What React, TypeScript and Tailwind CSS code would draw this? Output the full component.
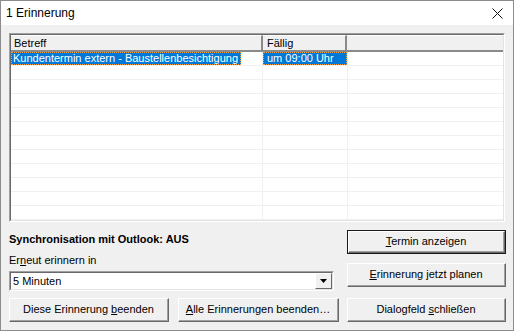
import React from "react";

const font = { fontFamily: '"Liberation Sans", Arial, sans-serif' };

function Btn({ children, w, primary }: { children: React.ReactNode; w: string; primary?: boolean }) {
  return (
    <div className={`${w} h-[24px] ${primary ? "border border-[#1a1a1a]" : ""}`}>
      <div className="h-full border-t border-l border-t-white border-l-white border-b border-r border-b-[#696969] border-r-[#696969]">
        <div className="h-full flex items-center justify-center bg-[#f0f0f0] border-b border-r border-b-[#a0a0a0] border-r-[#a0a0a0] text-[11px] text-black whitespace-nowrap">
          {children}
        </div>
      </div>
    </div>
  );
}

export default function App() {
  const rows = Array.from({ length: 12 });
  return (
    <div className="w-[514px] h-[331px] bg-[#f0f0f0] border border-[#8c8c8c] flex flex-col overflow-hidden" style={font}>
      {/* title bar */}
      <div className="h-[24px] bg-white flex items-center justify-between pl-[5px] pr-[10px] shrink-0">
        <span className="text-[12px] text-black">1 Erinnerung</span>
        <svg width="11" height="11" viewBox="0 0 11 11">
          <path d="M0.5 0.5L10.5 10.5M10.5 0.5L0.5 10.5" stroke="#111" strokeWidth="1" />
        </svg>
      </div>

      <div className="flex-1 px-[8px] pt-[8px] pb-[8px] flex flex-col">
        {/* list view */}
        <div className="h-[189px] border-t border-l border-t-[#a0a0a0] border-l-[#a0a0a0] border-b border-r border-b-white border-r-white">
          <div className="h-full border-t border-l border-t-[#696969] border-l-[#696969] border-b border-r border-b-[#e3e3e3] border-r-[#e3e3e3] bg-white overflow-hidden flex flex-col">
            <div className="h-[17px] flex shrink-0 bg-[#f0f0f0] border-b-2 border-b-[#8a8a8a] text-[11px] text-black">
              <div className="w-[252px] pl-[3px] flex items-center border-r-2 border-r-[#8a8a8a] border-t border-t-white">Betreff</div>
              <div className="w-[84px] pl-[4px] flex items-center border-r-2 border-r-[#8a8a8a] border-t border-t-white">Fällig</div>
              <div className="flex-1 border-t border-t-white" />
            </div>
            {rows.map((_, i) => (
              <div key={i} className="h-[14px] flex shrink-0 border-b border-b-[#f0f0f0] text-[11px]">
                <div className="w-[252px] border-r border-r-[#f0f0f0] flex">
                  {i === 0 && (
                    <div className="bg-[#0078d7] text-white flex items-center pl-[1px] pr-[2px] h-full whitespace-nowrap border border-dotted border-[#f5a142]">
                      Kundentermin extern - Baustellenbesichtigung
                    </div>
                  )}
                </div>
                <div className="w-[85px] border-r border-r-[#f0f0f0] flex">
                  {i === 0 && (
                    <div className="bg-[#0078d7] text-white flex items-center pl-[3px] h-full w-full whitespace-nowrap border border-dotted border-[#f5a142]">
                      um 09:00 Uhr
                    </div>
                  )}
                </div>
                <div className="flex-1" />
              </div>
            ))}
          </div>
        </div>

        {/* bottom area */}
        <div className="flex gap-[8px] mt-[8px] flex-1">
          <div className="flex-1 flex flex-col">
            <div className="text-[11px] font-bold text-black mt-[3px] leading-[13px]">Synchronisation mit Outlook: AUS</div>
            <div className="text-[11px] text-black mt-[8px] leading-[13px]">
              Er<u>n</u>eut erinnern in
            </div>
            <div className="mt-[4px] w-[325px] h-[20px] border-t border-l border-t-[#a0a0a0] border-l-[#a0a0a0] border-b border-r border-b-white border-r-white">
              <div className="h-full border-t border-l border-t-[#696969] border-l-[#696969] border-b border-r border-b-[#e3e3e3] border-r-[#e3e3e3] bg-white flex items-center justify-between">
                <span className="text-[11px] text-black pl-[2px]">5 Minuten</span>
                <div className="w-[17px] h-full border-t border-l border-t-white border-l-white border-b border-r border-b-[#696969] border-r-[#696969] bg-[#f0f0f0] flex items-center justify-center">
                  <svg width="7" height="4" viewBox="0 0 7 4">
                    <path d="M0 0H7L3.5 4Z" fill="#000" />
                  </svg>
                </div>
              </div>
            </div>
            <div className="flex gap-[9px] mt-auto">
              <Btn w="w-[160px]">
                <span>Diese Erinnerung <u>b</u>eenden</span>
              </Btn>
              <Btn w="w-[161px]">
                <span><u>A</u>lle Erinnerungen beenden…</span>
              </Btn>
            </div>
          </div>
          <div className="w-[159px] flex flex-col">
            <Btn w="w-[159px]" primary>
              <span><u>T</u>ermin anzeigen</span>
            </Btn>
            <div className="mt-[9px]">
              <Btn w="w-[159px]">
                <span><u>E</u>rinnerung jetzt planen</span>
              </Btn>
            </div>
            <div className="mt-auto">
              <Btn w="w-[159px]">
                <span>Dialogfeld <u>s</u>chließen</span>
              </Btn>
            </div>
          </div>
        </div>
      </div>
    </div>
  );
}
